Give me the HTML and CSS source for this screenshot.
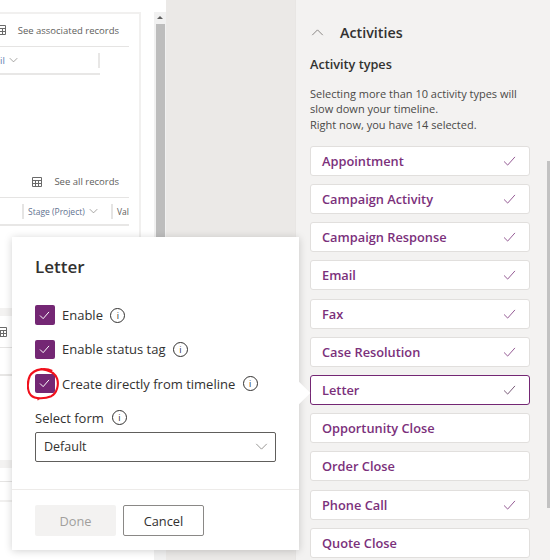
FILE: index.html
```html
<!DOCTYPE html>
<html lang="en">
<head>
<meta charset="utf-8">
<title>Letter activity settings</title>
<link rel="stylesheet" href="styles.css">
</head>
<body>
<div class="page">
  <main class="canvas">
    <div class="card-column">
      <section class="card">
        <div class="link-row top-link">
          <svg class="grid-icon" viewBox="0 0 12 12"><path d="M1.500 1.500h9v9h-9zM1.500 4.500h9M4.500 4.500v6M7.500 4.500v6M1.500 7.500h9"/></svg>
          <span>See associated records</span>
        </div>
        <div class="tab-row">
          <span class="tab-label">il</span>
          <svg class="small-chevron" viewBox="0 0 12 8"><path d="M1 1.500l5 5 5-5"/></svg>
          <span class="tab-divider"></span>
        </div>
        <div class="link-row all-link">
          <svg class="grid-icon" viewBox="0 0 12 12"><path d="M1.500 1.500h9v9h-9zM1.500 4.500h9M4.500 4.500v6M7.500 4.500v6M1.500 7.500h9"/></svg>
          <span>See all records</span>
        </div>
        <div class="column-row">
          <span class="column-head stage">Stage (Project)
            <svg class="small-chevron" viewBox="0 0 12 8"><path d="M1 1.500l5 5 5-5"/></svg>
          </span>
          <span class="column-head val">Val</span>
        </div>
        <div class="band first-band"></div>
        <div class="icon-row">
          <svg class="grid-icon" viewBox="0 0 12 12"><path d="M1.500 1.500h9v9h-9zM1.500 4.500h9M4.500 4.500v6M7.500 4.500v6M1.500 7.500h9"/></svg>
        </div>
        <div class="blank-row"></div>
        <div class="band second-band"></div>
        <div class="last-row"></div>
      </section>
    </div>
    <div class="scrollbar"><span class="scroll-arrow"></span><span class="scroll-thumb"></span></div>
  </main>
  <div class="gutter"></div>
  <aside class="panel">
    <header class="panel-head">
      <svg class="panel-chevron" viewBox="0 0 14 8"><path d="M1 7l6-6 6 6"/></svg>
      <h2>Activities</h2>
    </header>
    <h3>Activity types</h3>
    <p class="hint">Selecting more than 10 activity types will slow down your timeline.<br>Right now, you have 14 selected.</p>
    <ul class="types">
      <li class="type"><span>Appointment</span><svg class="tick" viewBox="0 0 14 11"><path d="M1 6l4 4 8-9"/></svg></li>
      <li class="type"><span>Campaign Activity</span><svg class="tick" viewBox="0 0 14 11"><path d="M1 6l4 4 8-9"/></svg></li>
      <li class="type"><span>Campaign Response</span><svg class="tick" viewBox="0 0 14 11"><path d="M1 6l4 4 8-9"/></svg></li>
      <li class="type"><span>Email</span><svg class="tick" viewBox="0 0 14 11"><path d="M1 6l4 4 8-9"/></svg></li>
      <li class="type"><span>Fax</span><svg class="tick" viewBox="0 0 14 11"><path d="M1 6l4 4 8-9"/></svg></li>
      <li class="type"><span>Case Resolution</span><svg class="tick" viewBox="0 0 14 11"><path d="M1 6l4 4 8-9"/></svg></li>
      <li class="type active"><span>Letter</span><svg class="tick" viewBox="0 0 14 11"><path d="M1 6l4 4 8-9"/></svg></li>
      <li class="type"><span>Opportunity Close</span></li>
      <li class="type"><span>Order Close</span></li>
      <li class="type"><span>Phone Call</span><svg class="tick" viewBox="0 0 14 11"><path d="M1 6l4 4 8-9"/></svg></li>
      <li class="type"><span>Quote Close</span></li>
    </ul>
  </aside>
  <span class="panel-scroll"></span>
  <section class="popup">
    <span class="beak"></span>
    <div class="popup-body">
      <h1>Letter</h1>
      <div class="option">
        <span class="box"><svg viewBox="0 0 12 10"><path d="M1 5l3.500 3.500L11 1"/></svg></span>
        <span>Enable</span>
        <span class="info">i</span>
      </div>
      <div class="option">
        <span class="box"><svg viewBox="0 0 12 10"><path d="M1 5l3.500 3.500L11 1"/></svg></span>
        <span>Enable status tag</span>
        <span class="info">i</span>
      </div>
      <div class="option">
        <span class="box"><svg viewBox="0 0 12 10"><path d="M1 5l3.500 3.500L11 1"/></svg></span>
        <span>Create directly from timeline</span>
        <span class="info">i</span>
        <svg class="scribble" viewBox="0 0 34 34"><path d="M26 3C20 0 8 0 3 8C0 14 0 24 4 28C8 32 18 32 25 29C31 26 33 17 31 11C29 5 22 2 14 1M11 31l1 2"/></svg>
      </div>
      <div class="select-label"><span>Select form</span><span class="info">i</span></div>
      <div class="select">
        <span>Default</span>
        <svg class="select-chevron" viewBox="0 0 14 8"><path d="M1 1l6 6 6-6"/></svg>
      </div>
    </div>
    <footer class="popup-foot">
      <span class="btn done">Done</span>
      <span class="btn cancel">Cancel</span>
    </footer>
  </section>
</div>
</body>
</html>
```

FILE: styles.css
```css
* { box-sizing: border-box; }
html, body { margin: 0; padding: 0; }
body {
  width: 550px;
  height: 560px;
  overflow: hidden;
  background: #fff;
  font-family: "Open Sans", "Noto Sans", sans-serif;
  color: #323130;
}
h1, h2, h3, p, ul { margin: 0; padding: 0; }
.page {
  position: relative;
  display: flex;
  width: 550px;
  height: 560px;
}
.canvas {
  display: flex;
  flex: 0 0 166px;
  height: 560px;
  padding-top: 12px;
  background: #fff;
}
.card-column { width: 154px; overflow: hidden; }
.card {
  width: 141px;
  height: 490px;
  border: 2px solid #f1f0ef;
  border-left: 0;
  padding-right: 10px;
  font-size: 9.500px;
  color: #605e5c;
}
.link-row {
  display: flex;
  align-items: center;
  justify-content: flex-end;
  gap: 11px;
  padding-right: 10px;
  border-bottom: 1px solid #e5e4e3;
  white-space: nowrap;
}
.top-link { height: 33px; }
.all-link { height: 32px; margin-top: 91px; }
.grid-icon { flex: none; width: 12px; height: 12px; fill: none; stroke: #6a6a6a; stroke-width: 1; }
.tab-row {
  display: flex;
  align-items: center;
  gap: 4px;
  width: 100px;
  height: 28px;
  border-bottom: 2px solid #e8e7e6;
  color: #5b7fb0;
}
.tab-divider { width: 2px; height: 15px; margin-left: auto; background: #e8e7e6; }
.small-chevron { flex: none; width: 9px; height: 6px; fill: none; stroke: #8a8886; stroke-width: 1; }
.column-row {
  display: flex;
  height: 28px;
  align-items: center;
  border-bottom: 2px solid #e8e7e6;
  font-size: 8.500px;
}
.column-head {
  display: flex;
  align-items: center;
  gap: 4px;
  height: 15px;
  border-left: 2px solid #e5e4e3;
  padding-left: 4px;
}
.stage { margin-left: 22px; width: 89px; color: #5f7390; }
.val { flex: 1; }
.band { height: 8px; background: #f3f2f1; }
.first-band { margin-top: 82px; }
.icon-row {
  display: flex;
  align-items: center;
  height: 32px;
  margin-left: -4px;
  border-bottom: 1px solid #e5e4e3;
}
.blank-row { height: 28px; border-bottom: 2px solid #e8e7e6; }
.second-band { margin-top: 84px; }
.last-row { height: 14px; border-bottom: 1px solid #e5e4e3; }
.scrollbar {
  display: flex;
  flex-direction: column;
  width: 12px;
  background: #f1f1f1;
}
.scroll-arrow {
  width: 0;
  height: 0;
  margin: 4px 0 5px 3px;
  border: 3px solid transparent;
  border-top: 0;
  border-bottom: 3px solid #606060;
}
.scroll-thumb { flex: 1; margin: 0 1px 20px 2px; background: #bdbdbd; }
.gutter { flex: 0 0 129px; background: #ebe9e7; }
.panel {
  flex: 1;
  padding: 0 20px 0 14px;
  background: #f3f2f1;
  border-left: 1px solid #e8e6e4;
}
.panel-scroll {
  position: absolute;
  right: 0;
  top: 161px;
  width: 3px;
  height: 347px;
  background: #c2c2c2;
}
.panel-head {
  display: flex;
  align-items: center;
  gap: 16px;
  height: 33px;
  margin-top: 16px;
  margin-left: 1px;
}
.panel-chevron { width: 13px; height: 7px; fill: none; stroke: #7a7876; stroke-width: 1; }
h2 { font-size: 14.300px; font-weight: 600; color: #323130; }
h3 { font-size: 12.700px; font-weight: 600; color: #323130; margin-top: 6px; }
.hint { font-size: 11px; line-height: 15.300px; color: #4a4947; margin-top: 13px; width: 215px; }
.types { list-style: none; margin-top: 14px; }
.type {
  display: flex;
  align-items: center;
  justify-content: space-between;
  height: 30px;
  margin-bottom: 8.200px;
  padding: 0 13px 0 11px;
  background: #fff;
  border: 1px solid #e1dfdd;
  border-radius: 3px;
  font-size: 12.800px;
  font-weight: 600;
  color: #7b307b;
}
.type.active { border-color: #742774; }
.type.active .tick { stroke: #6b4a6b; }
.tick { width: 13px; height: 10px; fill: none; stroke: #8a4a8a; stroke-width: 1; }
.popup {
  position: absolute;
  left: 12px;
  top: 237px;
  width: 287px;
  height: 313px;
  background: #fff;
  box-shadow: 0 1px 8px rgba(0, 0, 0, 0.18);
}
.beak {
  position: absolute;
  right: -8px;
  top: 148px;
  width: 16px;
  height: 16px;
  background: #fff;
  transform: rotate(45deg);
}
.popup-body { position: relative; padding: 18px 23px 0; height: 253px; border-bottom: 1px solid #edebe9; }
h1 { font-size: 17px; font-weight: 600; line-height: 24px; height: 50px; color: #323130; }
.option {
  position: relative;
  display: flex;
  align-items: center;
  gap: 7.500px;
  height: 20px;
  margin-bottom: 14.300px;
  font-size: 13px;
}
.box {
  display: flex;
  align-items: center;
  justify-content: center;
  width: 19.500px;
  height: 19.500px;
  background: #742774;
  border-radius: 2px;
}
.box svg { width: 11px; height: 9px; fill: none; stroke: #fff; stroke-width: 1.100; }
.info {
  display: inline-flex;
  align-items: center;
  justify-content: center;
  width: 15px;
  height: 15px;
  border: 1px solid #323130;
  border-radius: 50%;
  font-size: 9px;
  line-height: 1;
}
.scribble {
  position: absolute;
  left: -8px;
  top: -6px;
  width: 33px;
  height: 33px;
  fill: none;
  stroke: #f0101c;
  stroke-width: 2.200;
}
.select-label { display: flex; align-items: center; gap: 8px; font-size: 13px; height: 20px; margin-top: 2px; }
.select {
  display: flex;
  align-items: center;
  justify-content: space-between;
  height: 30px;
  margin-top: 4px;
  padding: 0 7px 0 8px;
  border: 1px solid #605e5c;
  border-radius: 2px;
  font-size: 12.500px;
}
.select-chevron { width: 13px; height: 7px; fill: none; stroke: #8a8886; stroke-width: 1; }
.popup-foot { display: flex; gap: 7px; padding: 15px 23px 0; }
.btn {
  display: flex;
  align-items: center;
  justify-content: center;
  width: 81px;
  height: 31px;
  border-radius: 2px;
  font-size: 12.800px;
  font-weight: 500;
}
.done { background: #f3f2f1; color: #a19f9d; }
.cancel { border: 1px solid #8a8886; color: #323130; }
```
